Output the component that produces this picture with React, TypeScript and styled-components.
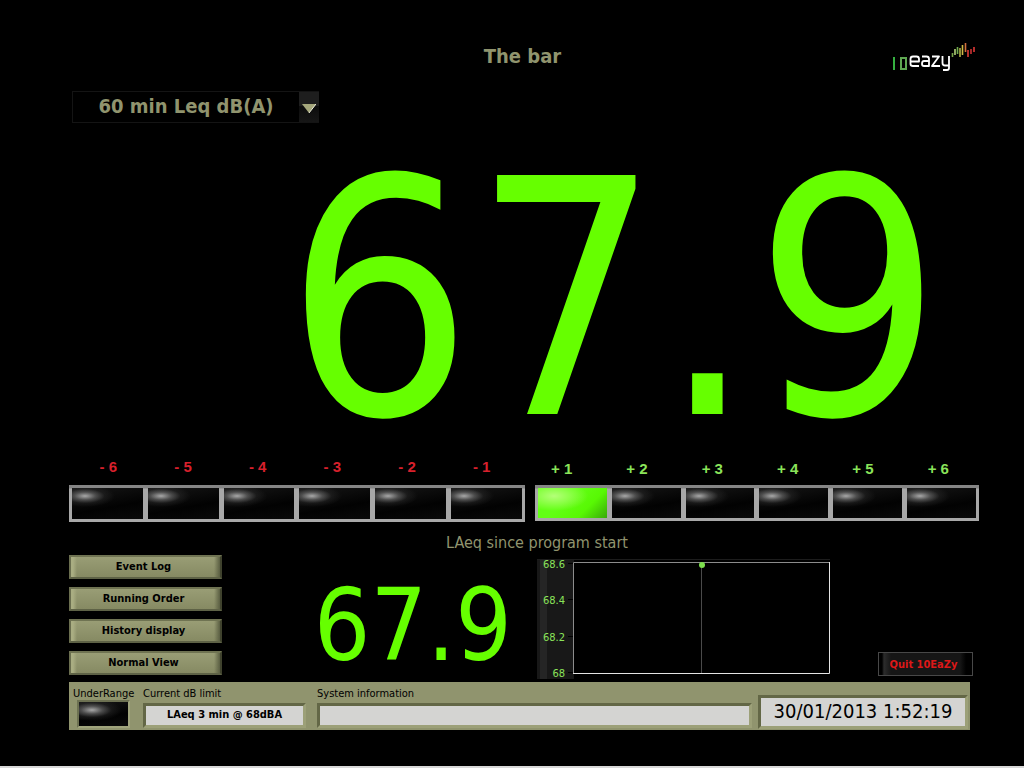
import React from "react";
import styled, { createGlobalStyle } from "styled-components";

const GlobalStyle = createGlobalStyle`
  *, *::before, *::after { box-sizing: border-box; }
  body {
    margin: 0;
    background: #000;
    font-family: "DejaVu Sans Condensed", "DejaVu Sans", sans-serif;
  }
  button, input, select { font-family: inherit; margin: 0; }
`;

const olive = "#90946e";
const lime = "#66ff00";

const Screen = styled.main`
  display: flex;
  flex-direction: column;
  min-height: 100vh;
  padding: 40px 45px 36px 69px;
  border-bottom: 2px solid #d8d8d8;
  background: #000;
`;

const Header = styled.header`
  display: grid;
  grid-template-columns: 1fr auto 1fr;
  align-items: start;
  padding-right: 3px;
  height: 51px;
`;

const VenueName = styled.h1`
  grid-column: 2;
  margin: 0;
  color: ${olive};
  font-size: 20px;
  line-height: 32px;
  font-weight: bold;
`;

const Logo = styled.svg`
  justify-self: end;
  display: block;
`;

const MeasureBox = styled.label`
  display: grid;
  grid-template-columns: 1fr 20px;
  width: 247px;
  height: 32px;
  margin-left: 3px;
  border: 1px solid #141414;
  border-right-width: 0;
`;

const MeasureSelect = styled.select`
  grid-area: 1 / 1 / 2 / 3;
  appearance: none;
  width: 100%;
  padding: 0 20px 2px 0;
  border: 0;
  background: transparent;
  color: ${olive};
  font-size: 20px;
  font-weight: bold;
  text-align: center;
  text-align-last: center;
`;

const ArrowPad = styled.span`
  grid-area: 1 / 2 / 2 / 3;
  display: flex;
  align-items: center;
  justify-content: center;
  padding-top: 4px;
  background: linear-gradient(#1e1e1e 45%, #0c0c0c 46%, #161616);
  pointer-events: none;
`;

const MainValue = styled.output`
  display: block;
  height: 332px;
  padding-right: 37px;
  color: ${lime};
  font-size: 328px;
  line-height: 356px;
  text-align: right;
  white-space: nowrap;
`;

const ScaleRow = styled.div`
  display: flex;
  gap: 5px;
  height: 30px;
  padding: 0 3px 0 2px;
`;

const Scale = styled.div<{ $over?: boolean }>`
  display: grid;
  grid-template-columns: repeat(6, 1fr);
  flex: ${(p) => (p.$over ? "452 1 0" : "448 1 0")};
  padding-top: ${(p) => (p.$over ? 4 : 2)}px;
  color: ${(p) => (p.$over ? "#8be45a" : "#d8202c")};
  font-family: "Liberation Sans", Arial, sans-serif;
  font-size: 15px;
  line-height: 20px;
  font-weight: bold;
  text-align: center;
`;

const LampRow = styled.div`
  display: flex;
  gap: 10px;
`;

const LampBank = styled.div<{ $over?: boolean }>`
  display: flex;
  gap: 5px;
  flex: ${(p) => (p.$over ? "444 1 0" : "456 1 0")};
  height: ${(p) => (p.$over ? 36 : 37)}px;
  padding: 3px;
  background: linear-gradient(#858585 3px, #a8a8a8 4px);
`;

const Lamp = styled.span<{ $lit?: boolean }>`
  flex: 1;
  background: ${(p) =>
    p.$lit
      ? "radial-gradient(ellipse 34px 15px at 16px 8px, #b4ff78, transparent), linear-gradient(135deg, #62ff14 40%, #58f804 70%, #38a808)"
      : "radial-gradient(ellipse 30px 11px at 13px 8px, #a8a8a8, rgba(120, 120, 120, 0.6) 35%, rgba(60, 60, 60, 0.3) 65%, transparent), linear-gradient(170deg, #161616, #020202 60%, #0a0a0a)"};
`;

const Lower = styled.section`
  display: grid;
  grid-template-columns: 153px 1fr 95px;
  height: 160px;
  padding-right: 6px;
`;

const ViewButtons = styled.nav`
  display: flex;
  flex-direction: column;
  gap: 8px;
  padding-top: 33px;
`;

const ViewButton = styled.button`
  height: 24px;
  padding: 0 4px 0 0;
  border: 2px solid;
  border-color: #6f7352 #3f422d #5e6246 #6a6e4f;
  background: linear-gradient(90deg, #a9ad82 2px, transparent 6px, transparent calc(100% - 6px), #5a5e42),
    linear-gradient(#999d75, #868a63);
  color: #000;
  font-size: 11px;
  line-height: 20px;
  font-weight: bold;
`;

const Readout = styled.div`
  padding: 0 48px 0 22px;
`;

const ReadoutTitle = styled.h2`
  margin: 0;
  padding-top: 11px;
  height: 37px;
  color: ${olive};
  font-size: 16px;
  line-height: 20px;
  font-weight: normal;
  text-align: center;
`;

const ReadoutRow = styled.div`
  display: flex;
  justify-content: space-between;
  height: 120px;
`;

const AverageValue = styled.output`
  flex: 1;
  padding-right: 25px;
  color: ${lime};
  font-size: 99px;
  line-height: 134px;
  text-align: right;
`;

const Chart = styled.svg`
  display: block;
  flex: none;
`;

const QuitButton = styled.button`
  align-self: end;
  height: 24px;
  margin-bottom: 6px;
  padding: 0 4px 0 0;
  border: 1px solid #484848;
  background: linear-gradient(90deg, #000 3px, #2c2c2c 5px, #161616 12px, #161616 calc(100% - 12px), #000 calc(100% - 6px));
  color: #dc1818;
  font-size: 11px;
  font-weight: bold;
`;

const StatusBar = styled.footer`
  display: grid;
  grid-template-columns: 64px 168px 1fr 210px;
  column-gap: 6px;
  height: 48px;
  margin-right: 9px;
  padding: 4px 2px 1px 4px;
  background: ${olive};
`;

const StatusItem = styled.div`
  display: flex;
  flex-direction: column;
  color: #000;
  font-size: 11px;
  line-height: 15px;
  white-space: nowrap;

  &:nth-child(-n + 2) {
    padding-right: 5px;
  }
`;

const RangeLamp = styled(Lamp)`
  flex: none;
  width: 53px;
  height: 28px;
  margin: -1px 0 0 4px;
  border: 2px solid;
  border-color: #6d7152 #a0a47c #a0a47c #6d7152;
  background-clip: padding-box;
`;

const Field = styled.input<{ $clock?: boolean }>`
  width: 100%;
  min-width: 0;
  height: ${(p) => (p.$clock ? 34 : 25)}px;
  margin-top: ${(p) => (p.$clock ? 9 : 2)}px;
  padding: 0 0 2px;
  border: 3px solid;
  border-color: #636746 #9ca078 #9ca078 #636746;
  background: #d4d4d2;
  color: #000;
  font-size: ${(p) => (p.$clock ? 20 : 11)}px;
  font-weight: ${(p) => (p.$clock ? "normal" : "bold")};
  text-align: center;
`;

const underSteps = ["- 6", "- 5", "- 4", "- 3", "- 2", "- 1"];
const overSteps = ["+ 1", "+ 2", "+ 3", "+ 4", "+ 5", "+ 6"];
const views = ["Event Log", "Running Order", "History display", "Normal View"];
const ticks = [
  { label: "68.6", y: 5 },
  { label: "68.4", y: 41 },
  { label: "68.2", y: 78 },
  { label: "68", y: 114 },
];

function BrandLogo() {
  return (
    <Logo width="84" height="32" viewBox="0 0 84 32" fill="none" role="img" aria-label="10eazy">
      <g strokeWidth="2">
        <path d="M2 17V30" stroke="#35b040" />
        <path d="M9 18H14V29H9Z" stroke="#5fa852" />
      </g>
      <g stroke="#fff" strokeWidth="1.800" strokeLinejoin="round">
        <path d="M27 26H21Q18.500 26 18.500 24V19Q18.500 16.500 21 16.500H24.500Q27 16.500 27 19V21.500H19" />
        <path d="M30 16.500H34.500Q37 16.500 37 19V26H32Q30 26 30 24Q30 21 32 21H37" />
        <path d="M40 16.500H47L40 26H48" />
        <path d="M50.500 16V23Q50.500 25.500 53 25.500H57M57 16V28Q57 30 55 30H51" />
      </g>
      <g strokeWidth="1.600">
        <path d="M60.500 13V17" stroke="#76a348" />
        <path d="M63 9V15" stroke="#b4d27a" />
        <path d="M65.500 7V14" stroke="#6eaa4c" />
        <path d="M68 8V17" stroke="#b0b448" />
        <path d="M70.500 5V15" stroke="#cdb845" />
        <path d="M73.500 3V12" stroke="#d2703c" />
        <path d="M76 10V17" stroke="#e03a36" />
        <path d="M79 9V14" stroke="#c83232" />
        <path d="M82 7V12" stroke="#e23836" />
      </g>
    </Logo>
  );
}

function LevelChart() {
  return (
    <Chart width="293" height="120" viewBox="0 0 293 120" role="img" aria-label="LAeq history">
      <rect width="37" height="120" fill="#181818" />
      <rect x="3" width="7" height="120" fill="#252525" />
      <path d="M0 .5H293" stroke="#1c1c1c" />
      <g fill="#8be45a" fontSize="11" textAnchor="end">
        {ticks.map((t) => (
          <text key={t.label} x="28" y={t.y + 4}>{t.label}</text>
        ))}
      </g>
      {ticks.map((t) => (
        <path key={t.label} d={`M31 ${t.y - 0.5}H36`} stroke="#000" />
      ))}
      <rect x="36" y="3" width="257" height="112" fill="#000" />
      <path d="M36.500 115V3.500H293" stroke="#8c8c8c" fill="none" />
      <path d="M36 114.500H292.500V3" stroke="#e4e4e4" fill="none" />
      <path d="M164.500 4V114" stroke="#4a4a4a" />
      <circle cx="165" cy="6" r="3" fill="#7ee04e" />
    </Chart>
  );
}

export default function App() {
  return (
    <>
      <GlobalStyle />
      <Screen>
        <Header>
          <VenueName>The bar</VenueName>
          <BrandLogo />
        </Header>
        <MeasureBox>
          <MeasureSelect aria-label="Measurement" defaultValue="leq60">
            <option value="leq60">60 min Leq dB(A)</option>
          </MeasureSelect>
          <ArrowPad>
            <svg width="14" height="10" viewBox="0 0 14 10" aria-hidden="true">
              <path d="M0 0H14L7 9Z" fill="#a5a77c" />
              <path d="M14 0L7 9" stroke="#eeeedc" />
            </svg>
          </ArrowPad>
        </MeasureBox>
        <MainValue>67.9</MainValue>
        <ScaleRow>
          <Scale>{underSteps.map((s) => <span key={s}>{s}</span>)}</Scale>
          <Scale $over>{overSteps.map((s) => <span key={s}>{s}</span>)}</Scale>
        </ScaleRow>
        <LampRow>
          <LampBank>{underSteps.map((s) => <Lamp key={s} />)}</LampBank>
          <LampBank $over>{overSteps.map((s, i) => <Lamp key={s} $lit={i === 0} />)}</LampBank>
        </LampRow>
        <Lower>
          <ViewButtons>
            {views.map((v) => <ViewButton key={v} type="button">{v}</ViewButton>)}
          </ViewButtons>
          <Readout>
            <ReadoutTitle>LAeq since program start</ReadoutTitle>
            <ReadoutRow>
              <AverageValue>67.9</AverageValue>
              <LevelChart />
            </ReadoutRow>
          </Readout>
          <QuitButton type="button">Quit 10EaZy</QuitButton>
        </Lower>
        <StatusBar>
          <StatusItem>
            <span>UnderRange</span>
            <RangeLamp />
          </StatusItem>
          <StatusItem>
            <label htmlFor="limit">Current dB limit</label>
            <Field id="limit" readOnly value="LAeq 3 min @ 68dBA" />
          </StatusItem>
          <StatusItem>
            <label htmlFor="info">System information</label>
            <Field id="info" readOnly value="" />
          </StatusItem>
          <StatusItem>
            <Field $clock aria-label="Date and time" readOnly value="30/01/2013 1:52:19" />
          </StatusItem>
        </StatusBar>
      </Screen>
    </>
  );
}
